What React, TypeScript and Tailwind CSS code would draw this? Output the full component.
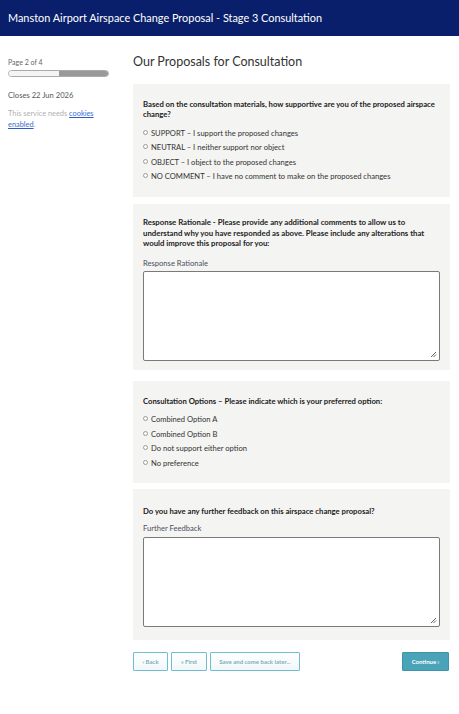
import React from 'react';

const Radio = ({ label }: { label: string }) => (
  <label className="flex items-center gap-[3px] h-[14.5px] text-[7.6px] text-[#333]">
    <span className="w-[5px] h-[5px] rounded-full border border-[#9a9a9a] bg-white shrink-0 -mt-[2px]" />
    <span>{label}</span>
  </label>
);

const Panel = ({ children, className = '' }: { children: React.ReactNode; className?: string }) => (
  <section className={`bg-[#f4f4f2] px-[10px] ${className}`}>{children}</section>
);

const Box = () => (
  <div className="relative h-[90px] w-[297px] rounded-[2px] border border-[#7a7a7a] bg-white">
    <svg className="absolute right-[2px] bottom-[2px]" width="7" height="7" viewBox="0 0 7 7">
      <path d="M6 1L1 6M6 3.5L3.5 6" stroke="#555" strokeWidth="0.9" />
    </svg>
  </div>
);

const NavButton = ({ children, className = '' }: { children: React.ReactNode; className?: string }) => (
  <button className={`h-[19px] rounded-[1px] border border-[#6fbdd0] bg-gradient-to-b from-white to-[#f1f8fa] text-[6px] font-bold text-[#7fadbd] ${className}`}>
    {children}
  </button>
);

export default function App() {
  return (
    <div className="min-h-[714px] bg-white" style={{ fontFamily: 'Lato, "Open Sans", sans-serif' }}>
      <header className="h-[36px] bg-[#0a1f6c] flex items-center px-[8px]">
        <h1 className="text-[10.9px] text-white">Manston Airport Airspace Change Proposal - Stage 3 Consultation</h1>
      </header>

      <div className="flex pl-[8px] pr-[10px]">
        <aside className="w-[101px] shrink-0 pt-[21px]">
          <p className="text-[7px] text-[#666] leading-[10px]">Page 2 of 4</p>
          <div className="mt-[3px] flex h-[7px] w-[101px] overflow-hidden rounded-full border border-[#aaa]">
            <div className="w-1/2 bg-[#f4f4f4]" />
            <div className="w-1/2 bg-[#999]" />
          </div>
          <p className="mt-[13px] text-[7.6px] text-[#555] leading-[11px]">Closes 22 Jun 2026</p>
          <p className="mt-[8px] text-[7.4px] text-[#b0b0b0] leading-[10.5px]">
            This service needs <span className="text-[#3b6fd0] underline decoration-[#2a5fc0]">cookies enabled</span>.
          </p>
        </aside>

        <main className="ml-[24px] flex-1">
          <h2 className="pt-[18px] text-[12.5px] text-[#333] leading-[16px]">Our Proposals for Consultation</h2>

          <Panel className="mt-[14px] pt-[15px] pb-[13px]">
            <p className="text-[7.7px] font-bold text-[#222] leading-[10px]">
              Based on the consultation materials, how supportive are you of the proposed airspace change?
            </p>
            <div className="mt-[7px]">
              <Radio label="SUPPORT – I support the proposed changes" />
              <Radio label="NEUTRAL – I neither support nor object" />
              <Radio label="OBJECT – I object to the proposed changes" />
              <Radio label="NO COMMENT – I have no comment to make on the proposed changes" />
            </div>
          </Panel>

          <Panel className="mt-[7px] pt-[13px] pb-[9px]">
            <p className="text-[7.8px] font-bold text-[#222] leading-[10.5px] pr-[6px]">
              Response Rationale - Please provide any additional comments to allow us to understand why you have responded as above. Please include any alterations that would improve this proposal for you:
            </p>
            <p className="mt-[9px] text-[7.6px] text-[#4a5060] leading-[10px]">Response Rationale</p>
            <div className="mt-[3px]">
              <Box />
            </div>
          </Panel>

          <Panel className="mt-[11px] pt-[15px] pb-[12px]">
            <p className="text-[7.7px] font-bold text-[#222] leading-[10px]">
              Consultation Options – Please indicate which is your preferred option:
            </p>
            <div className="mt-[7px]">
              <Radio label="Combined Option A" />
              <Radio label="Combined Option B" />
              <Radio label="Do not support either option" />
              <Radio label="No preference" />
            </div>
          </Panel>

          <Panel className="mt-[6px] pt-[17px] pb-[13px]">
            <p className="text-[7.7px] font-bold text-[#222] leading-[10px]">
              Do you have any further feedback on this airspace change proposal?
            </p>
            <p className="mt-[7px] text-[7.6px] text-[#4a5060] leading-[10px]">Further Feedback</p>
            <div className="mt-[4px]">
              <Box />
            </div>
          </Panel>

          <div className="mt-[12px] flex items-center">
            <NavButton className="w-[35px]">‹ Back</NavButton>
            <NavButton className="ml-[3px] w-[36px]">« First</NavButton>
            <NavButton className="ml-[3px] w-[90px]">Save and come back later...</NavButton>
            <button className="ml-auto mr-[1px] h-[19px] w-[47px] rounded-[1px] border border-[#3f95a8] bg-[#4aa3b8] text-[6px] font-bold text-white">
              Continue ›
            </button>
          </div>
        </main>
      </div>
    </div>
  );
}
